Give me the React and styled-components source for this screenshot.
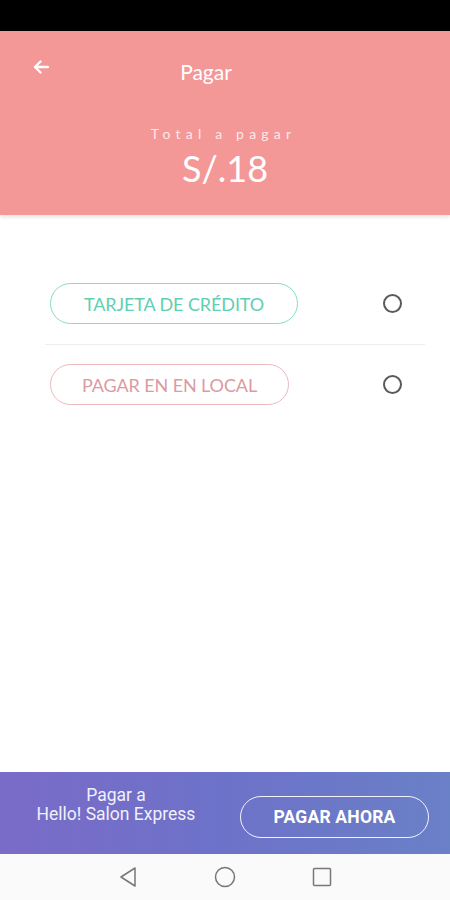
import React from "react";
import styled, { createGlobalStyle } from "styled-components";

const Global = createGlobalStyle`
  html, body { margin: 0; padding: 0; background: #fff; }
  #root { width: 450px; height: 900px; }
  * { box-sizing: border-box; }
`;

const Screen = styled.div`
  width: 450px;
  height: 900px;
  display: flex;
  flex-direction: column;
  background: #ffffff;
  font-family: Lato, "Open Sans", sans-serif;
  overflow: hidden;
`;

const StatusBar = styled.div`
  height: 31px;
  background: #000;
  flex-shrink: 0;
`;

const Header = styled.header`
  height: 184px;
  flex-shrink: 0;
  background: #f49797;
  box-shadow: 0 2px 4px rgba(0, 0, 0, 0.12);
  display: flex;
  flex-direction: column;
  color: #fff;
  position: relative;
  z-index: 1;
`;

const TopRow = styled.div`
  height: 80px;
  display: grid;
  grid-template-columns: 70px 1fr 70px;
  align-items: start;
  padding-top: 27px;
`;

const BackBtn = styled.div`
  display: flex;
  justify-content: flex-start;
  padding-left: 33px;
  padding-top: 2px;
`;

const Title = styled.h1`
  margin: 0;
  font-size: 21px;
  font-weight: 400;
  text-align: center;
  padding-left: 6px;
  padding-top: 2px;
  line-height: 24px;
  margin-right: 44px;
`;

const TotalBlock = styled.div`
  display: flex;
  flex-direction: column;
  align-items: center;
`;

const TotalLabel = styled.div`
  font-size: 14px;
  letter-spacing: 5.2px;
  line-height: 16px;
  margin-top: 15px;
  margin-right: 3px;
  color: #fbe9e9;
`;

const Amount = styled.div`
  font-size: 36px;
  line-height: 40px;
  margin-top: 6px;
  color: #fff;
`;

const Options = styled.main`
  flex: 1;
  padding: 68px 25px 0 45px;
  display: flex;
  flex-direction: column;
`;

const OptionRow = styled.div`
  display: flex;
  align-items: center;
  justify-content: space-between;
  padding: ${(p) => (p.$first ? "0 23px 20px 5px" : "19px 23px 0 5px")};
  border-bottom: ${(p) => (p.$first ? "1px solid #eeeeee" : "none")};
`;

const Pill = styled.div`
  width: ${(p) => p.$w}px;
  height: 41px;
  border-radius: 21px;
  border: 1.5px solid ${(p) => p.$color};
  color: ${(p) => p.$text};
  display: flex;
  align-items: center;
  justify-content: center;
  font-size: 18px;
  font-weight: 400;
  letter-spacing: -0.1px;
  text-transform: uppercase;
`;

const Radio = styled.div`
  width: 19px;
  height: 19px;
  border-radius: 50%;
  border: 2px solid #5a5a5a;
`;

const BottomBar = styled.div`
  height: 82px;
  flex-shrink: 0;
  background: linear-gradient(90deg, #7a6bc8 0%, #6d72c9 50%, #6a80c7 100%);
  display: flex;
  align-items: center;
  padding: 0 21px 0 24px;
  justify-content: space-between;
  font-family: Roboto, "Liberation Sans", sans-serif;
  color: #fff;
`;

const PayTo = styled.div`
  width: 184px;
  text-align: center;
  font-size: 17.5px;
  line-height: 19px;
  margin-top: -16px;
  color: #f1f0fb;
`;

const PayNow = styled.div`
  width: 189px;
  height: 42px;
  border-radius: 21px;
  border: 1.5px solid #f3f3fb;
  display: flex;
  align-items: center;
  justify-content: center;
  font-size: 17.5px;
  font-weight: 700;
  letter-spacing: 0.2px;
  margin-top: 7px;
`;

const NavBar = styled.nav`
  height: 46px;
  flex-shrink: 0;
  background: #fafafa;
  display: flex;
  align-items: center;
  justify-content: center;
  gap: 76px;
`;

const Arrow = () => (
  <svg width="16" height="14" viewBox="0 0 16 14">
    <path d="M15 7H2.5M7.5 1.5L2 7l5.5 5.5" fill="none" stroke="#fff" strokeWidth="2.4" strokeLinecap="round" strokeLinejoin="round" />
  </svg>
);

export default function App() {
  return (
    <Screen>
      <Global />
      <StatusBar />
      <Header>
        <TopRow>
          <BackBtn><Arrow /></BackBtn>
          <Title>Pagar</Title>
          <div />
        </TopRow>
        <TotalBlock>
          <TotalLabel>Total a pagar</TotalLabel>
          <Amount>S/.18</Amount>
        </TotalBlock>
      </Header>
      <Options>
        <OptionRow $first>
          <Pill $w={248} $color="#86dcc6" $text="#5fcfb1">Tarjeta de crédito</Pill>
          <Radio />
        </OptionRow>
        <OptionRow>
          <Pill $w={239} $color="#ecb9bd" $text="#dc9aa2">Pagar en en local</Pill>
          <Radio />
        </OptionRow>
      </Options>
      <BottomBar>
        <PayTo>Pagar a<br />Hello! Salon Express</PayTo>
        <PayNow>PAGAR AHORA</PayNow>
      </BottomBar>
      <NavBar>
        <svg width="20" height="22" viewBox="0 0 20 22">
          <path d="M17 2L3 11l14 9z" fill="none" stroke="#777" strokeWidth="1.5" strokeLinejoin="round" />
        </svg>
        <svg width="22" height="22" viewBox="0 0 22 22">
          <circle cx="11" cy="11" r="9.5" fill="none" stroke="#777" strokeWidth="1.5" />
        </svg>
        <svg width="20" height="20" viewBox="0 0 20 20">
          <rect x="1.5" y="1.5" width="17" height="17" rx="1" fill="none" stroke="#777" strokeWidth="1.5" />
        </svg>
      </NavBar>
    </Screen>
  );
}
